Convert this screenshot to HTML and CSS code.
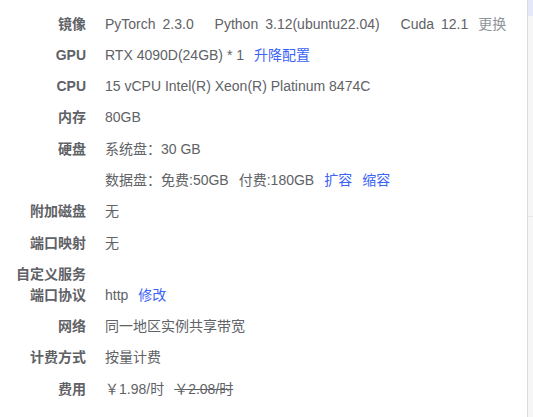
FILE: index.html
```html
<!DOCTYPE html>
<html lang="zh-CN">

<head>
    <meta charset="UTF-8">
    <title>实例配置</title>
    <link rel="stylesheet" href="styles.css">
</head>

<body>

    <div class="page">
        <div class="detail">
            <div class="row">
                <div class="label">镜像</div>
                <div class="value">
                    <span class="pkg">PyTorch</span><span class="ver">2.3.0</span>
                    <span class="pkg gap">Python</span><span class="ver">3.12(ubuntu22.04)</span>
                    <span class="pkg gap">Cuda</span><span class="ver">12.1</span>
                    <span class="muted">更换</span>
                </div>
            </div>
            <div class="row">
                <div class="label">GPU</div>
                <div class="value">RTX 4090D(24GB) * 1<a class="link">升降配置</a></div>
            </div>
            <div class="row">
                <div class="label">CPU</div>
                <div class="value">15 vCPU Intel(R) Xeon(R) Platinum 8474C</div>
            </div>
            <div class="row">
                <div class="label">内存</div>
                <div class="value">80GB</div>
            </div>
            <div class="row">
                <div class="label">硬盘</div>
                <div class="value">系统盘：30 GB</div>
            </div>
            <div class="row">
                <div class="label"></div>
                <div class="value">数据盘：免费:50GB<span class="item">付费:180GB</span><a class="link">扩容</a><a class="link">缩容</a></div>
            </div>
            <div class="row">
                <div class="label">附加磁盘</div>
                <div class="value">无</div>
            </div>
            <div class="row">
                <div class="label">端口映射</div>
                <div class="value">无</div>
            </div>
            <div class="row">
                <div class="label">自定义服务端口协议</div>
                <div class="value">http<a class="link">修改</a></div>
            </div>
            <div class="row">
                <div class="label">网络</div>
                <div class="value">同一地区实例共享带宽</div>
            </div>
            <div class="row">
                <div class="label">计费方式</div>
                <div class="value">按量计费</div>
            </div>
            <div class="row">
                <div class="label">费用</div>
                <div class="value">￥1.98/时<span class="item old">￥2.08/时</span></div>
            </div>
        </div>

        <div class="side">
            <div class="side-top"></div>
            <div class="side-mid"></div>
        </div>
    </div>

</body>

</html>
```

FILE: styles.css
```css
* {
    box-sizing: border-box;
}

html,
body {
    margin: 0;
    padding: 0;
    height: 100%;
    background: #fff;
    font-family: "Liberation Sans", Arial, "Noto Sans CJK SC", sans-serif;
    font-size: 14px;
    color: #606266;
}

.page {
    display: flex;
    height: 100%;
}

.detail {
    flex: 1;
    padding: 13.5px 0 0 14px;
}

.row {
    display: flex;
    align-items: flex-end;
    line-height: 21px;
    margin-bottom: 10.3px;
}

.label {
    width: 72px;
    flex-shrink: 0;
    text-align: right;
    font-weight: bold;
    color: #5f6266;
}

.value {
    margin-left: 19px;
    white-space: nowrap;
}

.ver {
    margin-left: 7px;
}

/* the line break before each span already adds a space */
.gap {
    margin-left: 17px;
}

.muted {
    margin-left: 6px;
    color: #909399;
}

.link {
    margin-left: 10px;
    color: #3b63f5;
    cursor: pointer;
}

.item {
    margin-left: 10px;
}

.old {
    text-decoration: line-through;
}

/* right edge strip */
.side {
    width: 6px;
    border-left: 1px solid #dcdcdc;
    background: #f6f6f7;
}

.side-top {
    height: 16px;
    background: #e4e8f8;
}

.side-mid {
    height: 201px;
    border-bottom: 1px solid #e6e6e6;
}
```
